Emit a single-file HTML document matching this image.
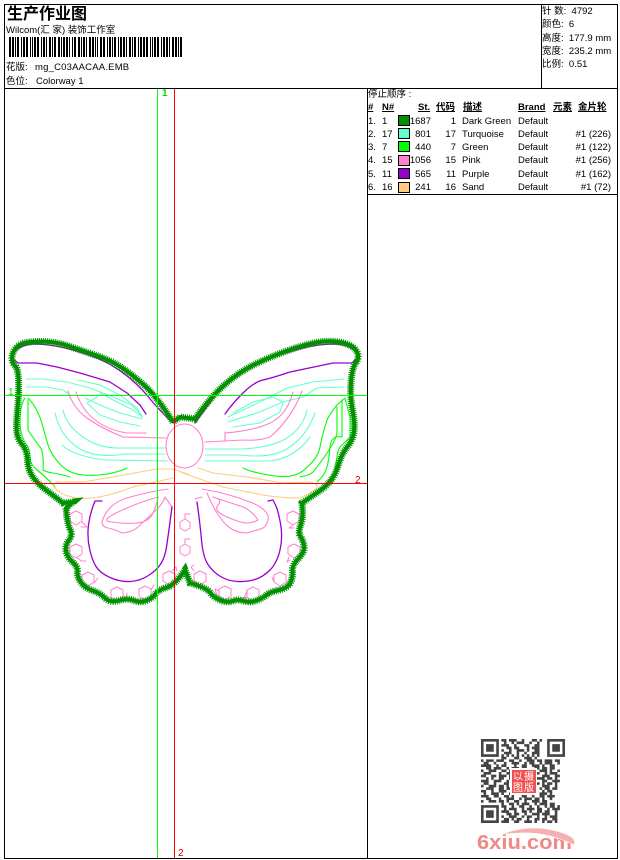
<!DOCTYPE html>
<html><head><meta charset="utf-8"><style>
html,body{margin:0;padding:0;background:#fff}
body{width:620px;height:860px;position:relative;overflow:hidden;font-family:"Liberation Sans","WenQuanYi Zen Hei","Noto Sans CJK SC",sans-serif;font-size:9.5px;color:#000}
.t{position:absolute;white-space:pre;line-height:12px}
.r{text-align:right}
.b{position:absolute;background:#000}
.h{font-weight:bold;text-decoration:underline;font-size:9.5px}
.s{position:absolute;left:398px;width:10px;height:9px;border:1px solid #000}
svg{position:absolute;left:0;top:0}
</style></head><body>
<div class="b" style="left:4px;top:4px;width:614px;height:1px"></div>
<div class="b" style="left:4px;top:88px;width:614px;height:1px"></div>
<div class="b" style="left:4px;top:858px;width:614px;height:1px"></div>
<div class="b" style="left:4px;top:4px;width:1px;height:855px"></div>
<div class="b" style="left:617px;top:4px;width:1px;height:855px"></div>
<div class="b" style="left:541px;top:4px;width:1px;height:84px"></div>
<div class="b" style="left:367px;top:88px;width:1px;height:771px"></div>
<div class="b" style="left:367px;top:194px;width:251px;height:1px"></div>

<div class="t" style="left:7px;top:8px;font-size:16px;font-weight:bold;line-height:14px">生产作业图</div>
<div class="t" style="left:6px;top:25px">Wilcom(汇 家) 装饰工作室</div>
<div class="t" style="left:6px;top:62px">花版:</div>
<div class="t" style="left:35px;top:62px;letter-spacing:.2px">mg_C03AACAA.EMB</div>
<div class="t" style="left:6px;top:76px">色位:</div>
<div class="t" style="left:36px;top:76px">Colorway 1</div>

<div class="t" style="left:542px;top:6px">针 数:  4792</div>
<div class="t" style="left:542px;top:19px">颜色:  6</div>
<div class="t" style="left:542px;top:33px">高度:  177.9 mm</div>
<div class="t" style="left:542px;top:46px">宽度:  235.2 mm</div>
<div class="t" style="left:542px;top:59px">比例:  0.51</div>

<div class="t" style="left:368px;top:89px">停止顺序 :</div>
<div class="t h" style="left:368px;top:102px">#</div>
<div class="t h" style="left:382px;top:102px">N#</div>
<div class="t h" style="left:418px;top:102px">St.</div>
<div class="t h" style="left:436px;top:102px">代码</div>
<div class="t h" style="left:463px;top:102px">描述</div>
<div class="t h" style="left:518px;top:102px">Brand</div>
<div class="t h" style="left:553px;top:102px">元素</div>
<div class="t h" style="left:578px;top:102px">金片轮</div>

<div class="s" style="top:115px;background:#009000"></div>
<div class="s" style="top:128px;background:#66ffcc"></div>
<div class="s" style="top:141px;background:#00ff00"></div>
<div class="s" style="top:155px;background:#ff80cc"></div>
<div class="s" style="top:168px;background:#9900cc"></div>
<div class="s" style="top:182px;background:#ffcc80"></div>

<div class="t" style="left:368px;top:116px">1.</div><div class="t" style="left:382px;top:116px">1</div><div class="t r" style="left:400px;width:31px;top:116px">1687</div><div class="t r" style="left:436px;width:20px;top:116px">1</div><div class="t" style="left:462px;top:116px">Dark Green</div><div class="t" style="left:518px;top:116px">Default</div>
<div class="t" style="left:368px;top:129px">2.</div><div class="t" style="left:382px;top:129px">17</div><div class="t r" style="left:400px;width:31px;top:129px">801</div><div class="t r" style="left:436px;width:20px;top:129px">17</div><div class="t" style="left:462px;top:129px">Turquoise</div><div class="t" style="left:518px;top:129px">Default</div><div class="t r" style="left:560px;width:51px;top:129px">#1 (226)</div>
<div class="t" style="left:368px;top:142px">3.</div><div class="t" style="left:382px;top:142px">7</div><div class="t r" style="left:400px;width:31px;top:142px">440</div><div class="t r" style="left:436px;width:20px;top:142px">7</div><div class="t" style="left:462px;top:142px">Green</div><div class="t" style="left:518px;top:142px">Default</div><div class="t r" style="left:560px;width:51px;top:142px">#1 (122)</div>
<div class="t" style="left:368px;top:155px">4.</div><div class="t" style="left:382px;top:155px">15</div><div class="t r" style="left:400px;width:31px;top:155px">1056</div><div class="t r" style="left:436px;width:20px;top:155px">15</div><div class="t" style="left:462px;top:155px">Pink</div><div class="t" style="left:518px;top:155px">Default</div><div class="t r" style="left:560px;width:51px;top:155px">#1 (256)</div>
<div class="t" style="left:368px;top:169px">5.</div><div class="t" style="left:382px;top:169px">11</div><div class="t r" style="left:400px;width:31px;top:169px">565</div><div class="t r" style="left:436px;width:20px;top:169px">11</div><div class="t" style="left:462px;top:169px">Purple</div><div class="t" style="left:518px;top:169px">Default</div><div class="t r" style="left:560px;width:51px;top:169px">#1 (162)</div>
<div class="t" style="left:368px;top:182px">6.</div><div class="t" style="left:382px;top:182px">16</div><div class="t r" style="left:400px;width:31px;top:182px">241</div><div class="t r" style="left:436px;width:20px;top:182px">16</div><div class="t" style="left:462px;top:182px">Sand</div><div class="t" style="left:518px;top:182px">Default</div><div class="t r" style="left:560px;width:51px;top:182px">#1 (72)</div>

<svg width="620" height="860" viewBox="0 0 620 860" fill="none">
<!-- barcode -->
<line x1="9" x2="182" y1="47" y2="47" stroke="#000" stroke-width="20" stroke-dasharray="2 1 2 1 1 1 2 2 1 1 2 1 2 2 1 1 1 1 2 1 2 2 1 1 2 1 1 2 2 1 1 1 2 2 2 1 1 1 2 1 2 1 1 2 1 1 2 2 2 1 1 1 2 1 1 2 2 1 2 1 1 1 1 2 2 1 2 2 1 1 2 1 1 1 2 2 1 1 2 1 2 1 1 2 2 1 1 1 2 2 1 1 2 1 2 1 2 2 1 1 1 1 2 1 2 2 1 1 2 1 2 1 1 2"/>

<!-- stitches -->
<g stroke-width="1.1" stroke-linejoin="round" stroke-linecap="round">
<!-- turquoise -->
<g stroke="#66ffcc" fill="none">
<path d="M26 379L43 379 67 382 90 388 113 397 132 405 142 416"/>
<path d="M26 387L47 387 63 390 70 395"/>
<path d="M78 380L100 385 120 395 137 408 142 416"/>
<path d="M100 393L117 402 133 410 142 417"/>
<path d="M85 398L100 405 120 413 142 419"/>
<path d="M97 397L87 403 100 415 120 422 140 426"/>
<path d="M63 410Q66 425 83 437T122 448L165 448"/>
<path d="M55 413Q60 435 77 447T125 454L165 454"/>
<path d="M62 445Q75 457 107 460L168 461"/>
<path d="M344 379L313 382 287 388 260 402 228 417"/>
<path d="M344 387L317 388 303 397 283 402"/>
<path d="M283 402L273 397 253 402 233 413"/>
<path d="M228 422L257 413 283 402"/>
<path d="M233 427L260 423 280 412 283 403"/>
<path d="M307 410Q303 428 287 438T240 449L205 449"/>
<path d="M315 413Q307 435 290 447T240 455L205 455"/>
<path d="M205 461L270 461Q295 458 310 437"/>
</g>
<!-- pink -->
<g stroke="#ff80cc" fill="none">
<path d="M68 391Q73 408 87 418T123 437L166 438"/>
<path d="M76 392Q82 410 95 420T127 433L146 433"/>
<path d="M293 392Q287 415 270 423T225 433"/>
<path d="M302 391Q292 418 270 437Q260 441 243 440L205 442"/>
<path d="M225 432L225 441"/>
<ellipse cx="184.5" cy="446" rx="18.5" ry="22"/>
<path d="M168 489Q147 492 127 498T102 522Q102 527 108 528T122 533Q133 532 138 527T153 513 165 497L172 507"/>
<path d="M158 497Q137 503 118 512T112 522Q125 524 137 523T153 513 158 497"/>
<path d="M202 489Q227 493 250 502T267 523Q265 527 263 528T247 533Q237 533 230 528T217 513 207 493"/>
<path d="M213 497L237 505Q250 508 258 520 253 523 247 523T227 517 218 505 213 497"/>
<path d="M195 499L202 497"/>
<g stroke-width="1">
<path d="M76 511l6 3v7l-6 4-6-4v-7zM82 522l5 5h-6"/>
<path d="M76 544l6 3v7l-6 4-6-4v-7zM78 558l3 3h5"/>
<path d="M88 572l6 3v7l-6 4-6-4v-7zM94 583l4-5"/>
<path d="M117 587l6 3v7l-6 4-6-4v-7zM122 597l4 2 1-6"/>
<path d="M145 586l6 3v7l-6 4-6-4v-7zM151 590l3-5"/>
<path d="M169 571l6 3v7l-6 4-6-4v-7zM172 571l4-4 1 4"/>
<path d="M185 519l5 3v6l-5 3-5-3v-6zM185 519v-5h5"/>
<path d="M185 544l5 3v6l-5 3-5-3v-6zM185 544v-5h5"/>
<path d="M200 571l6 3v7l-6 4-6-4v-7zM194 571l-3-4 3-2"/>
<path d="M225 586l6 3v7l-6 4-6-4v-7zM219 591l-4-2 2 7"/>
<path d="M253 587l6 3v7l-6 4-6-4v-7zM247 591l-3 7 3-1"/>
<path d="M280 572l6 3v7l-6 4-6-4v-7zM274 582l-2-5"/>
<path d="M294 544l6 3v7l-6 4-6-4v-7zM290 560l-3 2 2-5"/>
<path d="M293 511l6 3v7l-6 4-6-4v-7zM293 525l-4 3h5"/>
</g>
</g>
<!-- green -->
<g stroke="#00ff00" fill="none">
<path d="M25 398Q20 405 20 421T28 447Q30 452 30 458T37 470Q45 476 55 487"/>
<path d="M28 400L28 430Q36 442 40 447T43 470Q46 472 53 473T70 477"/>
<path d="M28 398Q38 408 43 427T50 450Q55 460 63 467T83 475Q95 476 107 474T127 468"/>
<path d="M243 468Q253 473 275 476T307 467Q318 458 320 447T327 420Q331 412 337 405L345 398"/>
<path d="M300 477Q310 475 313 472T327 453 337 430L337 407"/>
<path d="M317 482Q325 475 327 467T330 447 342 437L342 400"/>
<path d="M345 398L350 417 350 437 340 447Q337 452 337 457L333 482"/>
</g>
<!-- sand -->
<g stroke="#ffcc80" fill="none">
<path d="M53 485L58 482 83 482 113 477 140 472 157 469 173 469 190 475"/>
<path d="M53 485Q58 495 77 498T133 487L173 478"/>
<path d="M198 468L213 473 247 477 283 483 310 482Q318 484 317 487T300 498Q280 498 263 495L223 487 180 472"/>
</g>
<!-- purple -->
<g stroke="#9900cc" fill="none" stroke-width="1.3">
<path d="M13 353Q15 350 21 347T35 344 55 346 83 353 111 365 133 381 151 400 173 423"/>
<path d="M12 358L18 363 37 363 57 367 80 373 110 382 127 393 140 405 146 414"/>
<path d="M195 423L217 393Q228 382 240 373T270 358 303 348 337 344Q350 345 357 353"/>
<path d="M225 414Q232 404 243 393T263 380 290 372L333 363 352 363 357 358"/>
<path d="M102 501L95 501Q90 513 88.5 525Q87 537 89.5 548.5Q92 560 96 566.5Q100 573 110 577.5Q120 582 130 581.5Q140 581 148.5 575.5Q157 570 161 563.5Q165 557 166.5 547Q168 537 170 522L172 507"/>
<path d="M197 502Q200 523 201.5 540Q203 557 208 564.5Q213 572 220.5 576.5Q228 581 237.5 581.5Q247 582 255 579.5Q263 577 270 570Q277 563 280 550Q283 537 280.5 523.5Q278 510 275.5 505L273 500 268 501"/>
</g>
</g>
<!-- outline -->
<path d="M173 422Q157 397 145 386Q133 375 121.5 367.5Q110 360 96.5 355.5Q83 351 71.5 347Q60 343 50 342Q40 341 30 342Q20 343 16 348Q12 353 12 358Q12 363 15 365.5Q18 368 18.5 380Q19 393 18 403Q17 413 16.5 425Q16 437 21.5 443.5Q27 450 27.5 460Q28 470 32.5 476.5Q37 483 43.5 488L63 503 73 502 66 508Q67 523 70 529Q73 535 69 540Q65 545 66 551Q67 557 72.5 562Q78 567 77.5 572Q77 577 81 582.5Q85 588 92.5 590.5Q100 593 105 598Q110 603 119 600.5Q128 598 134 600.5Q140 603 146.5 600.5Q153 598 155.5 594Q158 590 166.5 587.5Q175 585 185 570L190 583Q207 588 210 592.5Q213 597 220 600Q227 603 232.5 601Q238 599 244 601Q250 603 256.5 600.5Q263 598 266.5 595Q270 592 279 590Q288 588 290.5 582.5Q293 577 292.5 571Q292 565 298.5 558.5Q305 552 304 546Q303 540 300.5 536.5Q298 533 300.5 525.5Q303 518 302.5 510.5L302 503 318 492Q333 482 337.5 467.5Q342 453 347.5 446.5Q353 440 354 431.5Q355 423 352.5 410Q350 397 351 382.5Q352 368 356 362.5Q360 357 356.5 351Q353 345 341.5 342.5Q330 340 316.5 342.5Q303 345 286.5 351Q270 357 256.5 363.5Q243 370 231.5 379Q220 388 211.5 398Q203 408 199 413.5L195 419 180 417 173 422" stroke="#009000" stroke-width="4" stroke-linejoin="round" fill="none"/>
<path d="M173 422Q157 397 145 386Q133 375 121.5 367.5Q110 360 96.5 355.5Q83 351 71.5 347Q60 343 50 342Q40 341 30 342Q20 343 16 348Q12 353 12 358Q12 363 15 365.5Q18 368 18.5 380Q19 393 18 403Q17 413 16.5 425Q16 437 21.5 443.5Q27 450 27.5 460Q28 470 32.5 476.5Q37 483 43.5 488L63 503 73 502 66 508Q67 523 70 529Q73 535 69 540Q65 545 66 551Q67 557 72.5 562Q78 567 77.5 572Q77 577 81 582.5Q85 588 92.5 590.5Q100 593 105 598Q110 603 119 600.5Q128 598 134 600.5Q140 603 146.5 600.5Q153 598 155.5 594Q158 590 166.5 587.5Q175 585 185 570L190 583Q207 588 210 592.5Q213 597 220 600Q227 603 232.5 601Q238 599 244 601Q250 603 256.5 600.5Q263 598 266.5 595Q270 592 279 590Q288 588 290.5 582.5Q293 577 292.5 571Q292 565 298.5 558.5Q305 552 304 546Q303 540 300.5 536.5Q298 533 300.5 525.5Q303 518 302.5 510.5L302 503 318 492Q333 482 337.5 467.5Q342 453 347.5 446.5Q353 440 354 431.5Q355 423 352.5 410Q350 397 351 382.5Q352 368 356 362.5Q360 357 356.5 351Q353 345 341.5 342.5Q330 340 316.5 342.5Q303 345 286.5 351Q270 357 256.5 363.5Q243 370 231.5 379Q220 388 211.5 398Q203 408 199 413.5L195 419 180 417 173 422" stroke="#009000" stroke-width="7" stroke-dasharray="1 1" fill="none"/>

<!-- crosshair -->
<g shape-rendering="crispEdges">
<path d="M157.5 89V858M5 395.5H367" stroke="#00ff00"/>
<path d="M174.5 89V858M5 483.5H367" stroke="#ff0000"/>
</g>
<text x="162" y="96" fill="#00e000" font-size="10" font-weight="bold" font-family="Liberation Sans">1</text>
<text x="8" y="395" fill="#00e000" font-size="10" font-family="Liberation Sans">1</text>
<text x="355" y="483" fill="#e00000" font-size="10" font-family="Liberation Sans">2</text>
<text x="178" y="856" fill="#e00000" font-size="10" font-family="Liberation Sans">2</text>

<!-- QR -->
<g transform="translate(481 739) scale(2.545)" stroke="#444" stroke-width="1.02" fill="none" style="filter:blur(.15px)">
<path d="M.5 .5h6v6h-6zM26.5 .5h6v6h-6zM.5 26.5h6v6h-6z"/>
<path d="M2 2h3v3h-3zM28 2h3v3h-3zM2 28h3v3h-3z" fill="#444" stroke="none"/>
<path d="M8 .5h2m1 0h3m2 0h1m3 0h2m1 0h1
M9 1.5h1m2 0h1m1 0h3m2 0h1m2 0h1
M8 2.5h3m2 0h1m3 0h2m2 0h2
M10 3.5h2m1 0h2m3 0h1m1 0h3
M8 4.5h1m2 0h1m2 0h3m1 0h1m2 0h2
M9 5.5h3m2 0h1m2 0h1m2 0h3
M8 6.5h1m1 0h1m1 0h1m1 0h1m1 0h1m1 0h1m1 0h1m1 0h1
M8 7.5h2m3 0h2m2 0h3m1 0h1
M0 8.5h1m1 0h3m1 0h3m2 0h2m2 0h1m2 0h3m1 0h2m1 0h3m1 0h2
M1 9.5h2m2 0h1m3 0h1m2 0h3m2 0h1m1 0h2m2 0h1m1 0h3m2 0h1
M0 10.5h4m2 0h1m1 0h2m3 0h1m2 0h2m2 0h3m1 0h1m2 0h2
M2 11.5h2m1 0h3m2 0h1m1 0h3m1 0h2m3 0h2m1 0h2m1 0h2
M0 12.5h1m2 0h3m2 0h2m1 0h1m9 0h1m1 0h3m1 0h1m2 0h1
M1 13.5h3m3 0h1m2 0h2m9 0h2m2 0h1m1 0h3
M0 14.5h2m2 0h2m1 0h3m1 0h1m9 0h1m2 0h3m2 0h2
M2 15.5h1m1 0h1m2 0h2m2 0h1m10 0h3m1 0h2m1 0h1
M0 16.5h3m2 0h3m2 0h1m10 0h1m2 0h2m2 0h3
M1 17.5h2m2 0h1m3 0h2m10 0h2m1 0h1m1 0h2m1 0h1
M0 18.5h1m2 0h3m1 0h2m1 0h1m9 0h2m2 0h3m2 0h1
M2 19.5h3m2 0h2m1 0h2m8 0h1m2 0h1m1 0h2m1 0h2
M0 20.5h2m2 0h1m2 0h3m2 0h2m1 0h2m2 0h3m2 0h1m1 0h2
M1 21.5h1m2 0h3m1 0h1m2 0h1m2 0h3m1 0h1m1 0h2m1 0h3m1 0h1
M0 22.5h3m2 0h2m2 0h2m1 0h1m3 0h2m2 0h1m2 0h2m1 0h3
M2 23.5h2m3 0h1m2 0h3m2 0h1m1 0h3m1 0h2m1 0h1m2 0h1
M0 24.5h1m2 0h3m1 0h2m1 0h1m2 0h2m2 0h1m2 0h3m1 0h2
M8 25.5h1m2 0h2m1 0h1m1 0h3m2 0h1m1 0h3m1 0h2
M8 26.5h2m2 0h1m2 0h2m2 0h1m2 0h1m2 0h1m1 0h2m1 0h1
M9 27.5h1m1 0h3m2 0h1m1 0h3m1 0h2m2 0h1m1 0h3
M8 28.5h3m2 0h1m2 0h2m1 0h1m2 0h2m1 0h2m2 0h1
M10 29.5h2m1 0h2m2 0h1m2 0h3m1 0h3m2 0h1
M8 30.5h1m2 0h3m2 0h1m1 0h2m2 0h1m2 0h1m1 0h3
M9 31.5h2m1 0h1m1 0h2m2 0h1m2 0h2m1 0h2m2 0h2
M8 32.5h3m2 0h2m2 0h3m1 0h1m2 0h1m1 0h2m1 0h1"/>
</g>
<rect x="510" y="768" width="27" height="27" fill="#fff"/>
<rect x="512" y="770" width="24" height="23" fill="#f05050"/>
<g fill="#fff" font-size="10" font-family="WenQuanYi Zen Hei,Noto Sans CJK SC,sans-serif">
<text x="513" y="780">以</text><text x="524" y="780">摄</text>
<text x="513" y="791">图</text><text x="524" y="791">版</text>
</g>
<!-- logo -->
<text x="477" y="849" fill="#f08888" font-size="20" font-weight="bold" font-family="Liberation Sans" textLength="95" lengthAdjust="spacingAndGlyphs">6xiu.com</text>
<path d="M497 836Q525 824 552 830T574 845Q548 832 522 833T497 836z" fill="#f6b0b0" stroke="#fff" stroke-width=".6"/>
</svg>
</body></html>
